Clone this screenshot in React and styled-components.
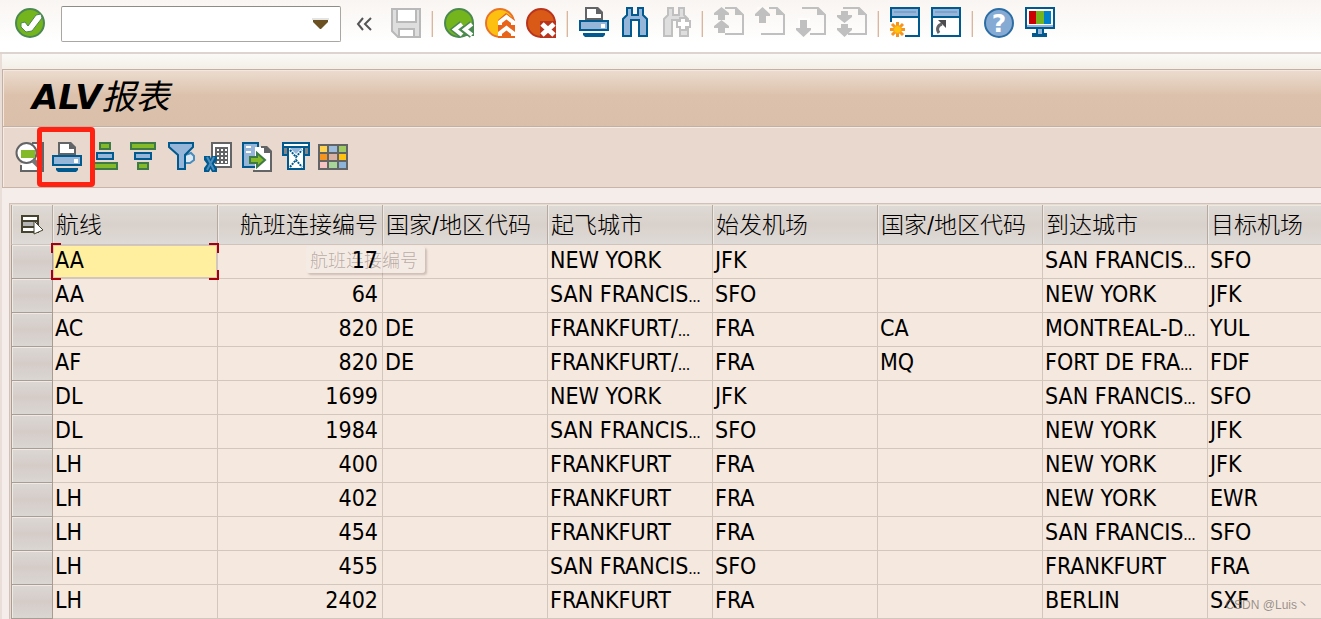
import React from 'react'
import styled, { createGlobalStyle, css } from 'styled-components'

const columns = [
    { label: '航线' },
    { label: '航班连接编号', right: true },
    { label: '国家/地区代码' },
    { label: '起飞城市' },
    { label: '始发机场' },
    { label: '国家/地区代码' },
    { label: '到达城市' },
    { label: '目标机场' },
]

// a trailing ~ marks a value that is cut off by the column
const flights = [
    ['AA', '17', '', 'NEW YORK', 'JFK', '', 'SAN FRANCIS~', 'SFO'],
    ['AA', '64', '', 'SAN FRANCIS~', 'SFO', '', 'NEW YORK', 'JFK'],
    ['AC', '820', 'DE', 'FRANKFURT/~', 'FRA', 'CA', 'MONTREAL-D~', 'YUL'],
    ['AF', '820', 'DE', 'FRANKFURT/~', 'FRA', 'MQ', 'FORT DE FRA~', 'FDF'],
    ['DL', '1699', '', 'NEW YORK', 'JFK', '', 'SAN FRANCIS~', 'SFO'],
    ['DL', '1984', '', 'SAN FRANCIS~', 'SFO', '', 'NEW YORK', 'JFK'],
    ['LH', '400', '', 'FRANKFURT', 'FRA', '', 'NEW YORK', 'JFK'],
    ['LH', '402', '', 'FRANKFURT', 'FRA', '', 'NEW YORK', 'EWR'],
    ['LH', '454', '', 'FRANKFURT', 'FRA', '', 'SAN FRANCIS~', 'SFO'],
    ['LH', '455', '', 'SAN FRANCIS~', 'SFO', '', 'FRANKFURT', 'FRA'],
    ['LH', '2402', '', 'FRANKFURT', 'FRA', '', 'BERLIN', 'SXF'],
]

const BLUE = '#005a8f'
const LIGHT = '#95b5d9'
const GREY = '#636466'
const OFF = '#c0c0c0'

const Page = ({ x, y = 0, color = OFF }) => (
    <g>
        <path d={`M${x} ${y + 1}H22L29 8V27H${x}`} fill="none" stroke={color} strokeWidth="2" />
        <path d={`M21 ${y}V8H30Z`} fill={color} />
    </g>
)

const UP = 'M7.5 0L15 7V9H11V16H4V9H0V7Z'
const DOWN = 'M7.5 30L15 23V21H11V13H4V21H0V23Z'

const Printer = () => (
    <g>
        <path d="M7 12V1H18L23 6V12Z" fill="#fff" stroke={GREY} strokeWidth="2" />
        <path d="M17 0V7H24V5L19 0Z" fill={GREY} />
        <rect x="1" y="14" width="28" height="9" fill={LIGHT} stroke={BLUE} strokeWidth="2" />
        <rect x="22" y="17" width="4" height="4" fill="#fff" />
        <path d="M4 26H26V28L24 30H6L4 28Z" fill={BLUE} />
    </g>
)

const Binoculars = ({ fill, stroke }) => (
    <path
        d="M7 1H12V8H18V1H23V8L27 12V29H19V13H11V29H3V12L7 8Z"
        fill={fill} stroke={stroke} strokeWidth="2"
    />
)

const Bars = ({ flip }) => (
    <g strokeWidth="2">
        <rect x={flip ? 3 : 10} y="1" width={flip ? 24 : 10} height="6" fill="#84b92a" stroke="#3d7a45" />
        <rect x="7" y="11" width="16" height="6" fill={LIGHT} stroke={BLUE} />
        <rect x={flip ? 10 : 3} y="21" width={flip ? 10 : 24} height="6" fill="#84b92a" stroke="#3d7a45" />
    </g>
)

const icons = {
    enter: (
        <g>
            <circle cx="15" cy="16" r="14" fill="#74b51d" stroke="#4c8852" strokeWidth="2" />
            <path d="M6 16L10 15L13 19L21 8L26 7L27 11L17 24L11 25L6 20Z" fill="#fff" stroke="#4c8852" />
        </g>
    ),
    save: (
        <g stroke="#b9b9b9" strokeWidth="2">
            <path d="M1 2H29V30H7L1 24Z" fill="#dedede" />
            <path d="M6 2H25V15H6Z" fill="#fff" />
            <path d="M8 30V22H23V30Z" fill="#fff" />
        </g>
    ),
    back: (
        <g>
            <circle cx="15" cy="16" r="14" fill="#74b51d" stroke="#4c8852" strokeWidth="2" />
            <path d="M16 31V29H30V15Z" fill="#4c8852" />
            <path d="M18 17L11 22.5L18 28M28 17L21 22.5L28 28" fill="none" stroke="#4c8852" strokeWidth="7" />
            <path d="M18 17L11 22.5L18 28M28 17L21 22.5L28 28" fill="none" stroke="#fff" strokeWidth="4" />
        </g>
    ),
    exit: (
        <g>
            <circle cx="15" cy="16" r="14" fill="#fec010" stroke="#e8732a" strokeWidth="2" />
            <path d="M13 13L21 6L30 13V31H13Z" fill="#e8641b" />
            <path d="M15 18V15L21.500 10L28 15V18M15 29V26L21.500 21L28 26V29" fill="none" stroke="#fff" strokeWidth="4" />
        </g>
    ),
    cancel: (
        <g>
            <circle cx="15" cy="16" r="14" fill="#d85a16" stroke="#b8341e" strokeWidth="2" />
            <path d="M14 14H30V31H14Z" fill="#b8341e" />
            <path d="M16 17L28 28M28 17L16 28" stroke="#fff" strokeWidth="5" />
        </g>
    ),
    print: <Printer />,
    find: <Binoculars fill={LIGHT} stroke={BLUE} />,
    findNext: (
        <g>
            <Binoculars fill="#dedede" stroke={OFF} />
            <path d="M19 11H25V14H29V20H25V23H19V20H16V14H19Z" fill="#fff" stroke={OFF} strokeWidth="2" />
        </g>
    ),
    firstPage: (
        <g>
            <Page x={11} />
            <path d="M7.500 0L15 6V8H11V13H4V8H0V6ZM7.500 13L15 19V21H11V26H4V21H0V19Z" fill={OFF} />
        </g>
    ),
    prevPage: <g><Page x={6} /><path d="M2 0H14V18H2Z" fill="#fdfaf8" /><path d={UP} fill={OFF} /></g>,
    nextPage: <g><Page x={6} /><path d="M2 11H14V30H2Z" fill="#fefdfc" /><path d={DOWN} fill={OFF} /></g>,
    lastPage: (
        <g>
            <Page x={11} />
            <path d="M4 4H11V8H15V10L7.500 16L0 10V8H4ZM4 17H11V21H15V23L7.500 30L0 23V21H4Z" fill={OFF} />
            <path d="M6 1H12" stroke={OFF} strokeWidth="2" />
        </g>
    ),
    session: (
        <g>
            <path d="M1 15V1H29V29H15" fill="#fff" stroke={BLUE} strokeWidth="2" />
            <rect x="2" y="2" width="26" height="7" fill={LIGHT} />
            <path d="M4 5H26" stroke="#7ba3cf" strokeWidth="2" />
            <path d="M1 10H29" stroke={BLUE} strokeWidth="2" />
            <path d="M7.500 15V30M0 22.500H15M2 17L13 28M13 17L2 28" stroke="#f7941d" strokeWidth="3" />
            <circle cx="7.500" cy="22.500" r="4" fill="#ffc20e" stroke="#f7a01d" />
        </g>
    ),
    shortcut: (
        <g>
            <rect x="1" y="1" width="28" height="28" fill="#fff" stroke={BLUE} strokeWidth="2" />
            <rect x="2" y="2" width="26" height="7" fill={LIGHT} />
            <path d="M4 5H26" stroke="#7ba3cf" strokeWidth="2" />
            <path d="M1 10H29" stroke={BLUE} strokeWidth="2" />
            <path d="M8 26C5 22 7 18 11 17" fill="none" stroke={GREY} strokeWidth="3" />
            <path d="M7 13H15V21Z" fill="#4d4d4f" />
        </g>
    ),
    help: (
        <g>
            <circle cx="15" cy="16" r="14" fill="#85aad4" stroke="#2c6da4" strokeWidth="2" />
            <text x="15" y="25" textAnchor="middle" fontFamily="DejaVu Sans" fontWeight="bold" fontSize="25" fill="#fff">?</text>
        </g>
    ),
    monitor: (
        <g>
            <rect x="1" y="1" width="28" height="20" fill="#fff" stroke={BLUE} strokeWidth="2" />
            <rect x="4" y="4" width="7" height="13" fill="#cc0000" />
            <rect x="11" y="4" width="8" height="13" fill="#74b51d" />
            <rect x="19" y="4" width="7" height="13" fill="#0080c8" />
            <path d="M2 19H28" stroke={LIGHT} strokeWidth="2" />
            <path d="M11 22H19V26H22V30H7V26H11Z" fill={BLUE} />
            <path d="M13 22H17V27H13Z" fill={LIGHT} />
        </g>
    ),
    details: (
        <g>
            <path d="M18 1H29V29H7V23" fill="#fff" stroke={GREY} strokeWidth="2" />
            <circle cx="12.500" cy="11" r="10" fill="#fff" stroke={GREY} strokeWidth="2" />
            <rect x="7" y="8" width="14" height="8" fill="#84b92a" />
            <path d="M19 18L27 26" stroke="#777" strokeWidth="5" />
        </g>
    ),
    sortUp: <Bars />,
    sortDown: <Bars flip />,
    filter: (
        <g stroke={BLUE} strokeWidth="2">
            <path d="M19 13L25 11L28 14V18L24 21H19Z" fill="#dce8f2" stroke="#4a8dbc" />
            <path d="M3 1H27V5L19 13V27H12V13L3 5Z" fill={LIGHT} />
        </g>
    ),
    excel: (
        <g>
            <rect x="8" y="1" width="19" height="24" fill="#fff" stroke={GREY} strokeWidth="2" />
            <rect x="11" y="5" width="13" height="17" fill={GREY} />
            <path d="M13 8H23M13 12H23M13 16H23M13 20H23" stroke="#fff" strokeWidth="2" strokeDasharray="2 2" />
            <path d="M0 14H6L7 17L8 14H13V18L10 22L13 26V30H8L6.500 27L5 30H0V26L3 22L0 18Z" fill={BLUE} />
            <path d="M3 15L10 28M10 15L3 28" stroke="#4a8dbc" strokeWidth="2" />
        </g>
    ),
    exportFile: (
        <g>
            <rect x="1" y="1" width="15" height="24" fill={LIGHT} stroke={BLUE} strokeWidth="2" />
            <path d="M4 5H9M4 10H9" stroke="#fff" strokeWidth="2" />
            <path d="M13 5H24L29 10V29H13Z" fill="#fff" />
            <path d="M19 5H24L29 10V29H11" fill="none" stroke={GREY} strokeWidth="2" />
            <path d="M22 4V11H30V9L25 4Z" fill={GREY} />
            <path d="M8 15H15V11L23 18L15 25V21H8Z" fill="#84b92a" stroke="#3d7a45" strokeWidth="2" />
        </g>
    ),
    mail: (
        <g>
            <path d="M3 5H29V13H3Z" fill="#858585" stroke={BLUE} strokeWidth="2" />
            <rect x="8" y="5" width="16" height="22" fill="#fff" stroke={BLUE} strokeWidth="2" />
            <path d="M9 5H23L16 12Z" fill={LIGHT} />
            <path d="M10 8L16 15L22 8M10 25L16 18L22 25" fill="none" stroke={BLUE} strokeWidth="2" strokeDasharray="2 1" />
            <rect x="3" y="1" width="26" height="4" fill="#fff" stroke={BLUE} strokeWidth="2" />
        </g>
    ),
    layout: (
        <g>
            <rect x="0" y="2" width="30" height="26" fill={GREY} />
            {['#ffd34d', '#9dbcdc', '#9fcb60', '#f7941d', '#d9b2a4', '#ffc20e', '#f6c3c3', '#a8d59a', '#8db3d9'].map((c, i) => (
                <rect key={c} x={[2, 11, 21][i % 3]} y={4 + Math.floor(i / 3) * 8} width={i % 3 === 1 ? 8 : 7} height="6" fill={c} />
            ))}
        </g>
    ),
}

const Tool = ({ name, label, marked }) => (
    <IconButton type="button" aria-label={label} $marked={marked}>
        <svg width="30" height="34" viewBox="0 0 30 34" aria-hidden="true">{icons[name]}</svg>
    </IconButton>
)

const App = () => {
    const [command, setCommand] = React.useState('')
    return (
        <>
            <GlobalStyle />
            <Shell>
                <SystemBar>
                    <Tool name="enter" label="Enter" />
                    <CommandBox>
                        <CommandInput
                            aria-label="Command"
                            value={command}
                            onChange={e => setCommand(e.target.value)}
                        />
                        <Drop type="button" aria-label="History">
                            <svg width="17" height="12" viewBox="0 0 17 12">
                                <path d="M0 1H17" stroke="#e4e4e4" strokeWidth="2" />
                                <path d="M1 2H16V4L9 11H8L1 4Z" fill="#6b5021" />
                            </svg>
                        </Drop>
                    </CommandBox>
                    <Collapse type="button" aria-label="Collapse">
                        <svg width="16" height="14" viewBox="0 0 16 14">
                            <path d="M7 1L2 7L7 13M15 1L9 7L15 13" fill="none" stroke="#555" strokeWidth="2" />
                        </svg>
                    </Collapse>
                    <Tool name="save" label="Save" />
                    <Divider />
                    <Tool name="back" label="Back" />
                    <Tool name="exit" label="Exit" />
                    <Tool name="cancel" label="Cancel" />
                    <Divider />
                    <Tool name="print" label="Print" />
                    <Tool name="find" label="Find" />
                    <Tool name="findNext" label="Find next" />
                    <Divider />
                    <Tool name="firstPage" label="First page" />
                    <Tool name="prevPage" label="Previous page" />
                    <Tool name="nextPage" label="Next page" />
                    <Tool name="lastPage" label="Last page" />
                    <Divider />
                    <Tool name="session" label="New session" />
                    <Tool name="shortcut" label="Create shortcut" />
                    <Divider />
                    <Tool name="help" label="Help" />
                    <Tool name="monitor" label="Customize layout" />
                </SystemBar>
                <Content>
                    <TitleBar>
                        <Title>ALV<TitleHan>报表</TitleHan></Title>
                    </TitleBar>
                    <AppBar>
                        <Tool name="details" label="Details" />
                        <Tool name="print" label="Print list" marked />
                        <Tool name="sortUp" label="Sort ascending" />
                        <Tool name="sortDown" label="Sort descending" />
                        <Tool name="filter" label="Filter" />
                        <Tool name="excel" label="Spreadsheet" />
                        <Tool name="exportFile" label="Export" />
                        <Tool name="mail" label="Send" />
                        <Tool name="layout" label="Change layout" />
                    </AppBar>
                    <Grid>
                        <Table>
                            <colgroup>
                                <SelectorCol />
                                {columns.slice(0, -1).map((c, i) => <DataCol key={i} />)}
                                <col />
                            </colgroup>
                            <thead>
                                <tr>
                                    <CornerCell>
                                        <RowButton type="button" aria-label="Select all">
                                            <svg width="24" height="22" viewBox="0 0 24 22">
                                                <path d="M2 2H18V18H2Z" fill="#fff" stroke="#46432f" strokeWidth="2" />
                                                <path d="M2 7H18V13H2Z" fill="#b5b5b5" stroke="#46432f" strokeWidth="2" />
                                                <path d="M14 7L23 16L14 20Z" fill="#fff" stroke="#46432f" strokeWidth="1" />
                                            </svg>
                                        </RowButton>
                                    </CornerCell>
                                    {columns.map((c, i) => <HeadCell key={i} $right={c.right}>{c.label}</HeadCell>)}
                                </tr>
                            </thead>
                            <tbody>
                                {flights.map((row, r) => (
                                    <tr key={r}>
                                        <SelectorCell><RowButton type="button" aria-label={`Row ${r + 1}`} /></SelectorCell>
                                        {row.map((value, i) => (
                                            <Cell key={i} $right={columns[i].right} $selected={r === 0 && i === 0}>
                                                <Value>{value.replace('~', '')}</Value>
                                                {value.endsWith('~') && <Dots>...</Dots>}
                                                {r === 0 && i === 0 && <Focus />}
                                                {r === 0 && i === 1 && <Tip>航班连接编号</Tip>}
                                            </Cell>
                                        ))}
                                    </tr>
                                ))}
                            </tbody>
                        </Table>
                    </Grid>
                </Content>
                <Watermark>CSDN @Luis丶</Watermark>
            </Shell>
        </>
    )
}

export default App

const GlobalStyle = createGlobalStyle`
    *{
        box-sizing:border-box;
    }
    body{
        margin:0;
        background:#f5edea;
        color:#000;
        font-family:"DejaVu Sans Condensed", "Noto Sans", "Noto Sans CJK SC", sans-serif;
    }
    button{
        padding:0;
        border:0;
        background:none;
        display:block;
    }
`

const Shell = styled.div`
    position:relative;
    height:100vh;
    overflow:hidden;
`

const SystemBar = styled.div`
    display:flex;
    align-items:center;
    gap:11px;
    padding:6px 15px 10px;
    background:linear-gradient(#f9f5f2, #fff 80%);
    border-bottom:2px solid #ddd4cf;
`

const IconButton = styled.button`
    position:relative;
    flex:none;
    width:30px;
    height:34px;
    svg{
        display:block;
    }
    ${props => props.$marked && css`
        z-index:2;
        &::after{
            content:"";
            position:absolute;
            inset:-15px -13px -11px -15px;
            border:5px solid #ff2212;
            border-radius:4px;
        }
    `}
`

const CommandBox = styled.div`
    display:flex;
    align-items:center;
    width:280px;
    height:36px;
    margin:0 4px 0 5px;
    padding-right:11px;
    background:#fff;
    border:1px solid #aaa6a2;
    border-top-color:#8f8b86;
    border-radius:2px;
`

const CommandInput = styled.input`
    flex:1;
    min-width:0;
    height:100%;
    padding:0 6px;
    border:0;
    outline:none;
    background:none;
    font:inherit;
    font-size:23px;
`

const Drop = styled.button`
    svg{
        display:block;
    }
`

const Collapse = styled.button`
    margin-right:8px;
    svg{
        display:block;
    }
`

const Divider = styled.span`
    width:1px;
    height:26px;
    background:#d9b79c;
    box-shadow:-1px 0 0 #f0e2d8;
`

const Content = styled.main`
    padding-top:15px;
    border-left:2px solid #e9dfd8;
    background:linear-gradient(#fbf9f6, #f4f0e8 14px, #f5edea 16px);
`

const TitleBar = styled.header`
    display:flex;
    align-items:center;
    height:58px;
    padding:0 0 4px 29px;
    background:linear-gradient(#ecdccf, #dcc2ad 45%, #dac0aa);
    border:1px solid #c3b0a2;
    border-right:0;
    box-shadow:inset 1px 1px 0 #f3e8df;
`

const Title = styled.h1`
    margin:0;
    font-family:"DejaVu Sans", sans-serif;
    font-size:34px;
    line-height:44px;
    font-style:italic;
    font-weight:bold;
`

const TitleHan = styled.span`
    font-family:"Noto Sans CJK SC", sans-serif;
    font-weight:400;
`

const AppBar = styled.div`
    display:flex;
    gap:8px;
    height:61px;
    padding:15px 0 0 11px;
    background:#e8d8cd;
    border:1px solid #c9b5a8;
    border-width:0 0 1px 1px;
    box-shadow:inset 1px 1px 0 #f6ece6;
`

const Grid = styled.div`
    margin:15px 0 0 7px;
    padding:1px 0 0 1px;
    border:1px solid #d0c2b8;
    border-width:1px 0 0 1px;
    background:#e9dccf;
`

const Table = styled.table`
    width:100%;
    table-layout:fixed;
    border-collapse:separate;
    border-spacing:0;
    font-size:23px;
    line-height:28px;
    th:last-child, td:last-child{
        border-right:0;
    }
`

const SelectorCol = styled.col`
    width:42px;
`

const DataCol = styled.col`
    width:165px;
`

const HeadCell = styled.th`
    height:40px;
    padding:0 4px 0 3px;
    font-family:"DejaVu Sans Condensed", "Noto Sans CJK SC", sans-serif;
    font-weight:300;
    text-align:${props => props.$right ? "right" : "left"};
    white-space:nowrap;
    background:linear-gradient(#dedad6, #d9d1cb 50%, #dedad7);
    border-right:1px solid #b5a9a0;
    border-bottom:1px solid #cfc3bb;
    box-shadow:inset 1px 1px 0 #ece8e4;
`

const CornerCell = styled(HeadCell)`
    padding:0;
    border-left:1px solid #b5a9a0;
    svg{
        display:block;
        margin:auto;
    }
`

const Cell = styled.td`
    position:relative;
    height:34px;
    padding:0 4px 4px 2px;
    text-align:${props => props.$right ? "right" : "left"};
    white-space:nowrap;
    background:${props => props.$selected ? "#ffef9f" : "#f5e8df"};
    border-right:1px solid #d3c6bd;
    border-bottom:1px solid #d3c6bd;
    box-shadow:${props => props.$selected ? "inset 0 0 0 1px #d3c6bd" : "none"};
`

const Value = styled.span`
    position:relative;
    z-index:2;
`

const SelectorCell = styled.td`
    height:34px;
    padding:0;
    background:linear-gradient(#dcd8d4, #d5ccc8 50%, #dad6d2);
    border:1px solid #a89c94;
    border-width:0 1px 1px 1px;
    box-shadow:inset 1px 1px 0 #eeeae6;
`

const RowButton = styled.button`
    width:100%;
    height:30px;
`

const Dots = styled.span`
    font-family:"Liberation Serif", serif;
    font-size:16px;
    line-height:1;
`

// red corner marks round the active cell
const Focus = styled.span`
    --c:#a80008;
    position:absolute;
    inset:-2px;
    z-index:1;
    background:
        linear-gradient(var(--c), var(--c)) 0 0 / 10px 2px,
        linear-gradient(var(--c), var(--c)) 0 0 / 2px 10px,
        linear-gradient(var(--c), var(--c)) 100% 0 / 10px 2px,
        linear-gradient(var(--c), var(--c)) 100% 0 / 2px 10px,
        linear-gradient(var(--c), var(--c)) 0 100% / 10px 2px,
        linear-gradient(var(--c), var(--c)) 0 100% / 2px 10px,
        linear-gradient(var(--c), var(--c)) 100% 100% / 10px 2px,
        linear-gradient(var(--c), var(--c)) 100% 100% / 2px 10px;
    background-repeat:no-repeat;
`

const Tip = styled.span`
    position:absolute;
    left:88px;
    top:1px;
    z-index:1;
    padding:0 7px 0 4px;
    font-family:"Noto Sans CJK SC", sans-serif;
    font-size:18px;
    line-height:27px;
    font-weight:300;
    color:rgba(90, 70, 65, 0.4);
    background:rgba(246, 238, 236, 0.5);
    border-radius:3px;
    box-shadow:2px 2px 2px rgba(120, 100, 90, 0.3);
`

const Watermark = styled.div`
    position:absolute;
    right:12px;
    bottom:6px;
    z-index:3;
    font-family:"Liberation Sans", "Noto Sans CJK SC", sans-serif;
    font-size:12px;
    line-height:16px;
    color:rgba(110, 105, 100, 0.7);
`
